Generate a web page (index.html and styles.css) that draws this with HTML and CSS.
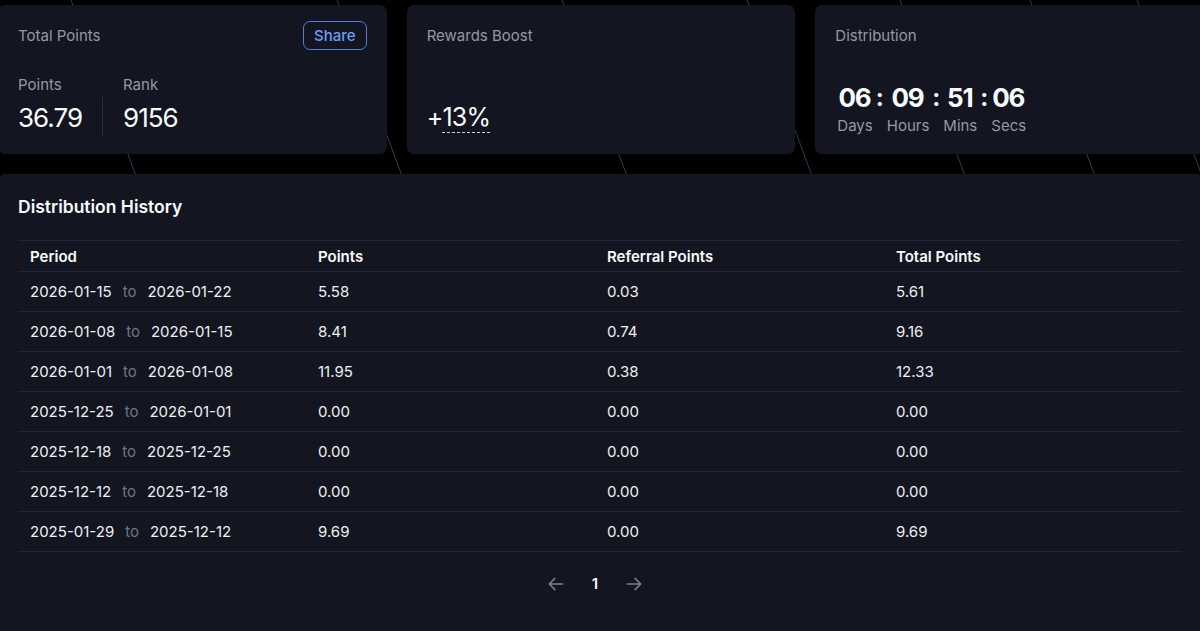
FILE: index.html
```html
<!DOCTYPE html>
<html lang="en">
<head>
<meta charset="utf-8">
<title>Points</title>
<link rel="stylesheet" href="styles.css">
</head>
<body>
<svg class="bg-lines" width="1200" height="631" viewBox="0 0 1200 631" aria-hidden="true">
  <g stroke="#3a3b42" stroke-width="1">
    <line x1="71" y1="0" x2="304" y2="631"/>
    <line x1="337" y1="0" x2="570" y2="631"/>
    <line x1="562" y1="0" x2="795" y2="631"/>
    <line x1="747" y1="0" x2="980" y2="631"/>
    <line x1="900" y1="0" x2="1133" y2="631"/>
    <line x1="1030" y1="0" x2="1263" y2="631"/>
    <line x1="1137" y1="0" x2="1370" y2="631"/>
  </g>
</svg>
<main class="page">
  <section class="cards">
    <div class="card">
      <div class="card-head">
        <span class="card-title">Total Points</span>
        <button class="share-btn">Share</button>
      </div>
      <div class="stats">
        <span class="stat-label">Points</span>
        <span></span>
        <span class="stat-label">Rank</span>
        <span class="stat-value">36.79</span>
        <span class="stat-divider"></span>
        <span class="stat-value">9156</span>
      </div>
    </div>
    <div class="card">
      <div class="card-head">
        <span class="card-title">Rewards Boost</span>
      </div>
      <div class="boost">+<span class="dashed">13%</span></div>
    </div>
    <div class="card">
      <div class="card-head">
        <span class="card-title">Distribution</span>
      </div>
      <div class="countdown">
        <div class="unit"><span class="num">06</span><span class="unit-label">Days</span></div>
        <span class="colon">:</span>
        <div class="unit"><span class="num">09</span><span class="unit-label">Hours</span></div>
        <span class="colon">:</span>
        <div class="unit"><span class="num">51</span><span class="unit-label">Mins</span></div>
        <span class="colon">:</span>
        <div class="unit"><span class="num">06</span><span class="unit-label">Secs</span></div>
      </div>
    </div>
  </section>

  <section class="panel">
    <h2 class="panel-title">Distribution History</h2>
    <table class="history">
      <colgroup>
        <col class="c1"><col class="c2"><col class="c3"><col>
      </colgroup>
      <thead>
        <tr><th>Period</th><th>Points</th><th>Referral Points</th><th>Total Points</th></tr>
      </thead>
      <tbody>
        <tr><td>2026-01-15<span class="to">to</span>2026-01-22</td><td>5.58</td><td>0.03</td><td>5.61</td></tr>
        <tr><td>2026-01-08<span class="to">to</span>2026-01-15</td><td>8.41</td><td>0.74</td><td>9.16</td></tr>
        <tr><td>2026-01-01<span class="to">to</span>2026-01-08</td><td>11.95</td><td>0.38</td><td>12.33</td></tr>
        <tr><td>2025-12-25<span class="to">to</span>2026-01-01</td><td>0.00</td><td>0.00</td><td>0.00</td></tr>
        <tr><td>2025-12-18<span class="to">to</span>2025-12-25</td><td>0.00</td><td>0.00</td><td>0.00</td></tr>
        <tr><td>2025-12-12<span class="to">to</span>2025-12-18</td><td>0.00</td><td>0.00</td><td>0.00</td></tr>
        <tr><td>2025-01-29<span class="to">to</span>2025-12-12</td><td>9.69</td><td>0.00</td><td>9.69</td></tr>
      </tbody>
    </table>
    <nav class="pager">
      <span class="pager-arrow">
        <svg width="18" height="18" viewBox="0 0 24 24" fill="none" stroke="currentColor" stroke-width="2" stroke-linecap="round" stroke-linejoin="round"><path d="M10.5 19.5 3 12m0 0 7.5-7.5M3 12h18"/></svg>
      </span>
      <span class="pager-num">1</span>
      <span class="pager-arrow">
        <svg width="18" height="18" viewBox="0 0 24 24" fill="none" stroke="currentColor" stroke-width="2" stroke-linecap="round" stroke-linejoin="round"><path d="M13.5 4.5 21 12m0 0-7.5 7.5M21 12H3"/></svg>
      </span>
    </nav>
  </section>
</main>
</body>
</html>
```

FILE: styles.css
```css
* { box-sizing: border-box; }

html, body {
  margin: 0;
  padding: 0;
  background: #000;
  overflow: hidden;
}

body {
  position: relative;
  width: 1200px;
  height: 631px;
  font-family: Inter, "Liberation Sans", sans-serif;
  color: #f3f4f6;
}

.bg-lines {
  position: absolute;
  left: 0;
  top: 0;
  z-index: 0;
}

.page {
  position: relative;
  z-index: 1;
  width: 1206px;
  margin: 5px 0 0 -2px;
  display: flex;
  flex-direction: column;
  gap: 20px;
}

.cards {
  display: grid;
  grid-template-columns: repeat(3, 1fr);
  gap: 20px;
}

.card {
  background: #131620;
  border-radius: 7px;
  height: 149px;
  padding: 16px 20px 0 20px;
  display: flex;
  flex-direction: column;
}

.card-head {
  display: flex;
  align-items: center;
  justify-content: space-between;
  height: 29px;
}

.card-title {
  font-size: 15px;
  color: #9499a3;
}

.share-btn {
  font-family: inherit;
  font-size: 15px;
  font-weight: 500;
  color: #6d9ef5;
  background: transparent;
  border: 1.5px solid #4f7fd6;
  border-radius: 7px;
  height: 29px;
  padding: 0 10px;
}

.stats {
  margin-top: 25px;
  display: grid;
  grid-template-columns: auto 1px auto;
  column-gap: 20px;
  justify-content: start;
  align-items: center;
}

.stat-label {
  font-size: 15px;
  line-height: 20px;
  color: #9499a3;
}

.stat-value {
  font-size: 26px;
  line-height: 40px;
  padding-top: 3px;
  color: #f9fafb;
  letter-spacing: -1px;
}

.stat-divider {
  width: 1px;
  height: 40px;
  background: #2a2e3a;
}

.boost {
  margin-top: 52px;
  font-size: 25px;
  line-height: 30px;
  color: #f9fafb;
  letter-spacing: -0.8px;
}

.dashed {
  border-bottom: 1.5px dashed #cfd3da;
}

.countdown {
  margin-top: 33px;
  display: flex;
  align-items: flex-start;
  gap: 2px;
  margin-left: 2px;
}

.unit {
  display: flex;
  flex-direction: column;
  align-items: center;
}

.num, .colon {
  font-size: 26px;
  font-weight: 700;
  line-height: 30px;
  color: #f9fafb;
  letter-spacing: -1.2px;
}

.num {
  padding-right: 1px;
}

.colon {
  font-size: 24px;
  letter-spacing: 0;
  padding: 0 1px;
}

.unit-label {
  font-size: 15px;
  line-height: 26px;
  color: #9499a3;
}

.panel {
  background: #131620;
  border-radius: 7px 7px 0 0;
  height: 460px;
  padding: 21px 22px 0 20px;
}

.panel-title {
  margin: 0 0 21px 0;
  font-size: 17.5px;
  font-weight: 600;
  line-height: 24px;
  color: #f9fafb;
}

.history {
  width: 100%;
  border-collapse: collapse;
  table-layout: fixed;
  font-size: 15px;
}

.history col.c1 { width: 288px; }
.history col.c2 { width: 289px; }
.history col.c3 { width: 289px; }

.history th {
  text-align: left;
  font-weight: 600;
  height: 31px;
  padding: 0 12px;
  border-top: 1px solid #232734;
  border-bottom: 1px solid #232734;
  color: #f9fafb;
}

.history td {
  height: 40px;
  padding: 0 12px;
  border-bottom: 1px solid #232734;
  color: #eef0f3;
}

.to {
  color: #70757f;
  margin: 0 11px;
}

.pager {
  display: flex;
  align-items: center;
  justify-content: center;
  gap: 27px;
  margin-top: 22px;
  padding-right: 10px;
}

.pager-arrow {
  color: #7d818b;
  display: flex;
}

.pager-num {
  font-size: 15px;
  font-weight: 600;
  color: #f9fafb;
}
```
